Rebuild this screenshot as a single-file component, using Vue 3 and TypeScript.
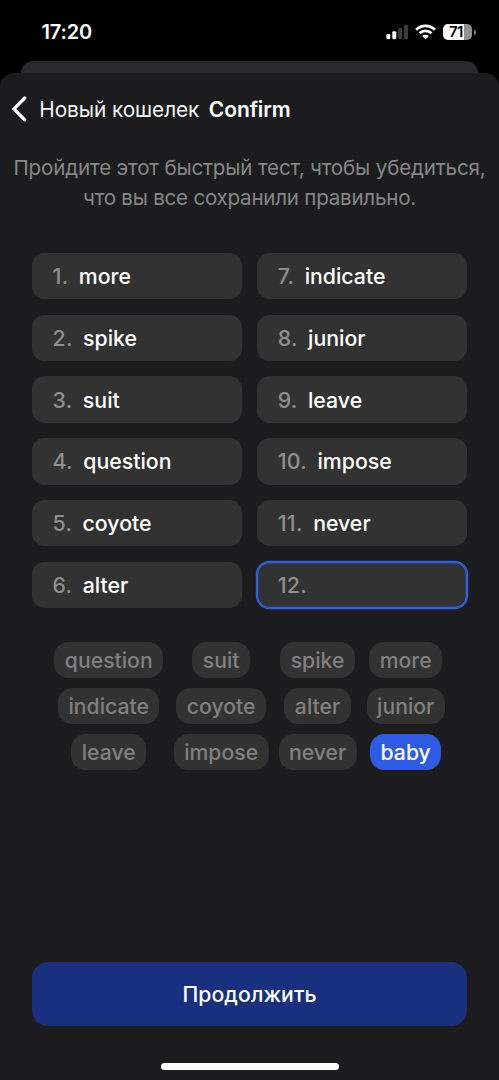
<script setup lang="ts">
interface Slot {
  n: number
  word: string
}
interface Chip {
  word: string
  active?: boolean
}

const slots: Slot[] = [
  'more', 'spike', 'suit', 'question', 'coyote', 'alter',
  'indicate', 'junior', 'leave', 'impose', 'never', '',
].map((word, i) => ({ n: i + 1, word }))

const chips: Chip[] = [
  { word: 'question' }, { word: 'suit' }, { word: 'spike' }, { word: 'more' },
  { word: 'indicate' }, { word: 'coyote' }, { word: 'alter' }, { word: 'junior' },
  { word: 'leave' }, { word: 'impose' }, { word: 'never' }, { word: 'baby', active: true },
]
</script>

<template>
  <div class="screen">
    <header class="status">
      <span class="time">17:20</span>
      <div class="indicators">
        <svg class="signal" width="22" height="16" viewBox="0 0 22 16">
          <rect x="0.3" y="10" width="4" height="5.2" rx="1.1" fill="#fff" />
          <rect x="6.3" y="7.2" width="4" height="8" rx="1.1" fill="#fff" />
          <rect x="12.2" y="4" width="4" height="11.2" rx="1.1" fill="#3b3b3d" />
          <rect x="18" y="0.7" width="4" height="14.5" rx="1.1" fill="#3b3b3d" />
        </svg>
        <svg class="wifi" width="21" height="16" viewBox="0 0 21 16">
          <g fill="none" stroke="#fff" stroke-width="2.7">
            <path d="M1.1 5.7C6.3 .5 14.7 .5 19.9 5.7" />
            <path d="M4.5 9.3C7.8 6.1 13.2 6.1 16.5 9.3" />
          </g>
          <path d="M7.2 11.9C9 10.3 12 10.3 13.8 11.9L10.5 15.2Z" fill="#fff" />
        </svg>
        <div class="battery">
          <span class="level">71</span>
        </div>
        <span class="nub"></span>
      </div>
    </header>

    <div class="back-sheet"></div>

    <main class="sheet">
      <nav class="nav">
        <svg class="chevron" width="16" height="26" viewBox="0 0 16 26">
          <path d="M13.7 2L3 12.9L13.7 23.8" fill="none" stroke="#fff" stroke-width="3.3" stroke-linecap="round" stroke-linejoin="miter" />
        </svg>
        <span class="parent">Новый кошелек</span>
        <h1 class="title">Confirm</h1>
      </nav>

      <p class="hint">
        <span class="line-a">Пройдите этот быстрый тест, чтобы убедиться,</span><br />
        <span class="line-b">что вы все сохранили правильно.</span>
      </p>

      <section class="slots">
        <div v-for="s in slots" :key="s.n" class="slot" :class="{ current: !s.word }">
          <span class="num">{{ s.n }}.</span>
          <span class="word">{{ s.word }}</span>
        </div>
      </section>

      <section class="chips">
        <button v-for="c in chips" :key="c.word" class="chip" :class="{ active: c.active }">{{ c.word }}</button>
      </section>

      <button class="continue">Продолжить</button>
      <div class="home"></div>
    </main>
  </div>
</template>

<style>
body {
  background: #000;
}
</style>

<style scoped>
.screen {
  width: 499px;
  height: 1080px;
  overflow: hidden;
  display: flex;
  flex-direction: column;
  background: #000;
  color: #fff;
  font-family: Inter, "Liberation Sans", sans-serif;
}
.screen *,
.screen *::before {
  box-sizing: border-box;
}
button {
  border: 0;
  padding: 0;
  font: inherit;
}
.status {
  height: 60.5px;
  flex: none;
  display: flex;
  justify-content: space-between;
  padding: 20px 23.5px 0 41.5px;
}
.time {
  font-size: 20px;
  line-height: 24px;
  font-weight: 600;
  letter-spacing: -0.15px;
}
.indicators {
  display: flex;
  align-items: flex-start;
  padding-top: 4px;
}
.wifi {
  margin-left: 6.5px;
}
.battery {
  width: 29.5px;
  height: 16px;
  margin-left: 7px;
  padding-left: 6.2px;
  border-radius: 5px;
  background: linear-gradient(90deg, #fff 21px, #919193 21px);
  color: #000;
}
.level {
  display: block;
  font-size: 15px;
  line-height: 16px;
  font-weight: 600;
  letter-spacing: -0.6px;
}
.nub {
  width: 2px;
  height: 5px;
  margin: 5.5px 0 0 1.3px;
  border-radius: 0 2px 2px 0;
  background: #79797b;
}
.back-sheet {
  flex: none;
  height: 12.5px;
  margin: 0 21px;
  border-radius: 12px 12px 0 0;
  background: #2a2a2c;
}
.sheet {
  flex: 1;
  display: flex;
  flex-direction: column;
  border-radius: 14px 14px 0 0;
  background: #1c1c1e;
}
.nav {
  display: flex;
  align-items: center;
  height: 72px;
  padding-left: 10.5px;
}
.chevron {
  flex: none;
}
.parent {
  margin-left: 12.8px;
  font-size: 20.8px;
  font-weight: 400;
  letter-spacing: -0.08px;
  color: #f4f4f5;
  white-space: nowrap;
}
.title {
  margin: 0 0 0 9.6px;
  font-size: 21px;
  font-weight: 600;
  letter-spacing: -0.1px;
}
.hint {
  margin: 8px 0 0;
  font-size: 20.6px;
  line-height: 30px;
  font-weight: 400;
  text-align: center;
  white-space: nowrap;
  color: #868688;
}
.line-a {
  letter-spacing: -0.16px;
}
.line-b {
  letter-spacing: -0.25px;
}
.slots {
  margin: 39.8px 32px 0;
  display: grid;
  grid-template-columns: 1fr 1fr;
  grid-template-rows: repeat(6, 46.4px);
  grid-auto-flow: column;
  gap: 15.4px;
}
.slot {
  display: flex;
  align-items: center;
  gap: 10.4px;
  padding: 0 0 0 20.5px;
  border-radius: 12.5px;
  background: #323232;
  font-size: 21.3px;
  font-weight: 500;
}
.slot.current {
  box-shadow: 0 0 0 1.2px #2f5fe4, inset 0 0 0 1.2px #2f5fe4;
}
.num {
  color: #8f8f8f;
  letter-spacing: 0.3px;
}
.chips {
  margin: 33.6px 0 0 54px;
  display: grid;
  grid-template-columns: 109.5px 94.5px 77.5px 78px;
  grid-auto-rows: 36px;
  gap: 10.4px;
  justify-items: center;
}
.chip {
  padding: 0 10.4px;
  border-radius: 14.5px;
  background: #323232;
  color: #808080;
  font-size: 21.2px;
  font-weight: 500;
}
.chip.active {
  background: #2d5be3;
  color: #fff;
}
.continue {
  height: 64px;
  margin: auto 32px 0;
  border-radius: 16px;
  background: #19307f;
  color: #fff;
  font-size: 21.2px;
  font-weight: 500;
  letter-spacing: 0.1px;
}
.home {
  width: 178px;
  height: 6.5px;
  margin: 37px auto 10.5px;
  border-radius: 4px;
  background: #fff;
}
</style>
